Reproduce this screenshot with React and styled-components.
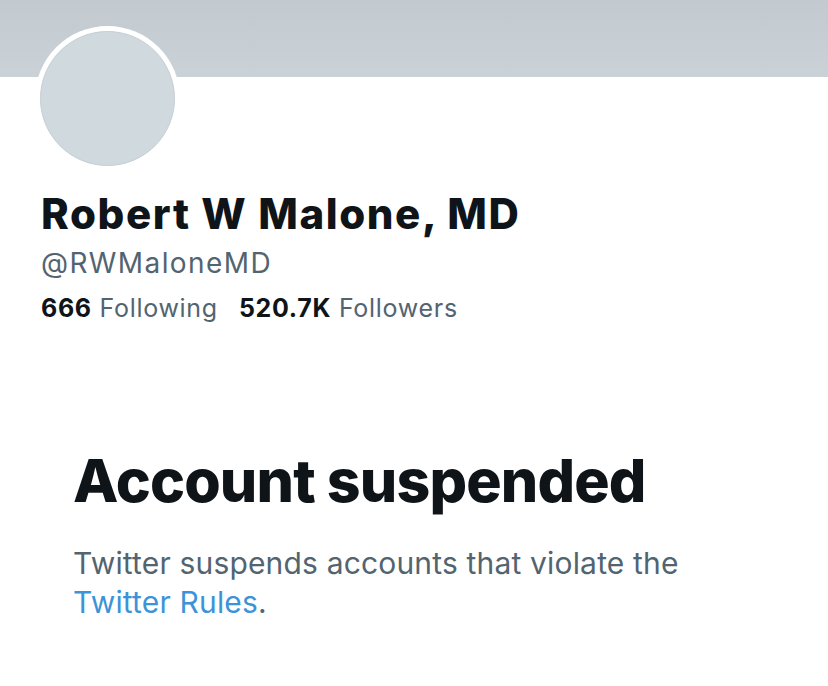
import React from "react";
import styled, { createGlobalStyle } from "styled-components";

const GlobalStyle = createGlobalStyle`
  html, body {
    margin: 0;
    padding: 0;
    background: #ffffff;
  }
  body {
    font-family: "Inter", "Liberation Sans", sans-serif;
    color: #0f1419;
    -webkit-font-smoothing: antialiased;
  }
`;

const Page = styled.div`
  width: 828px;
  height: 686px;
  overflow: hidden;
  background: #fff;
`;

const Banner = styled.div`
  height: 77px;
  background: linear-gradient(180deg, #c3cacf 0%, #cbd2d7 100%);
`;

const Profile = styled.div`
  padding: 0 0 0 41px;
`;

const AvatarRing = styled.div`
  width: 145px;
  height: 145px;
  margin: -51px 0 0 -6px;
  box-sizing: border-box;
  border-radius: 50%;
  background: #fff;
  padding: 5px;
`;

const Avatar = styled.div`
  width: 100%;
  height: 100%;
  box-sizing: border-box;
  border-radius: 50%;
  background: #cfd9de;
  border: 1px solid #c6cfd5;
`;

const Name = styled.h1`
  margin: 19px 0 0;
  font-size: 42px;
  line-height: 48px;
  font-weight: 800;
  letter-spacing: 1.6px;
  color: #0f1419;
`;

const Handle = styled.div`
  margin-top: 9px;
  font-size: 28px;
  line-height: 32px;
  letter-spacing: 1.4px;
  color: #536471;
`;

const Stats = styled.div`
  display: flex;
  gap: 21px;
  margin-top: 14px;
  font-size: 25px;
  line-height: 30px;
  letter-spacing: 0.7px;
  color: #536471;
`;

const Stat = styled.span`
  b {
    font-weight: 700;
    color: #0f1419;
  }
`;

const Notice = styled.section`
  padding: 125px 0 0 73px;
`;

const Title = styled.h2`
  margin: 0;
  font-size: 59px;
  line-height: 66px;
  font-weight: 800;
  letter-spacing: -0.85px;
  color: #0f1419;
`;

const Body = styled.p`
  margin: 30px 0 0;
  width: 640px;
  font-size: 30px;
  line-height: 38.5px;
  letter-spacing: 0.17px;
  color: #536471;
`;

const RulesLink = styled.a`
  color: #3d93d8;
  text-decoration: none;
`;

export default function App() {
  return (
    <Page>
      <GlobalStyle />
      <Banner />
      <Profile>
        <AvatarRing>
          <Avatar />
        </AvatarRing>
        <Name>Robert W Malone, MD</Name>
        <Handle>@RWMaloneMD</Handle>
        <Stats>
          <Stat>
            <b>666</b> Following
          </Stat>
          <Stat>
            <b>520.7K</b> Followers
          </Stat>
        </Stats>
      </Profile>
      <Notice>
        <Title>Account suspended</Title>
        <Body>
          Twitter suspends accounts that violate the{" "}
          <RulesLink href="#">Twitter Rules</RulesLink>.
        </Body>
      </Notice>
    </Page>
  );
}
